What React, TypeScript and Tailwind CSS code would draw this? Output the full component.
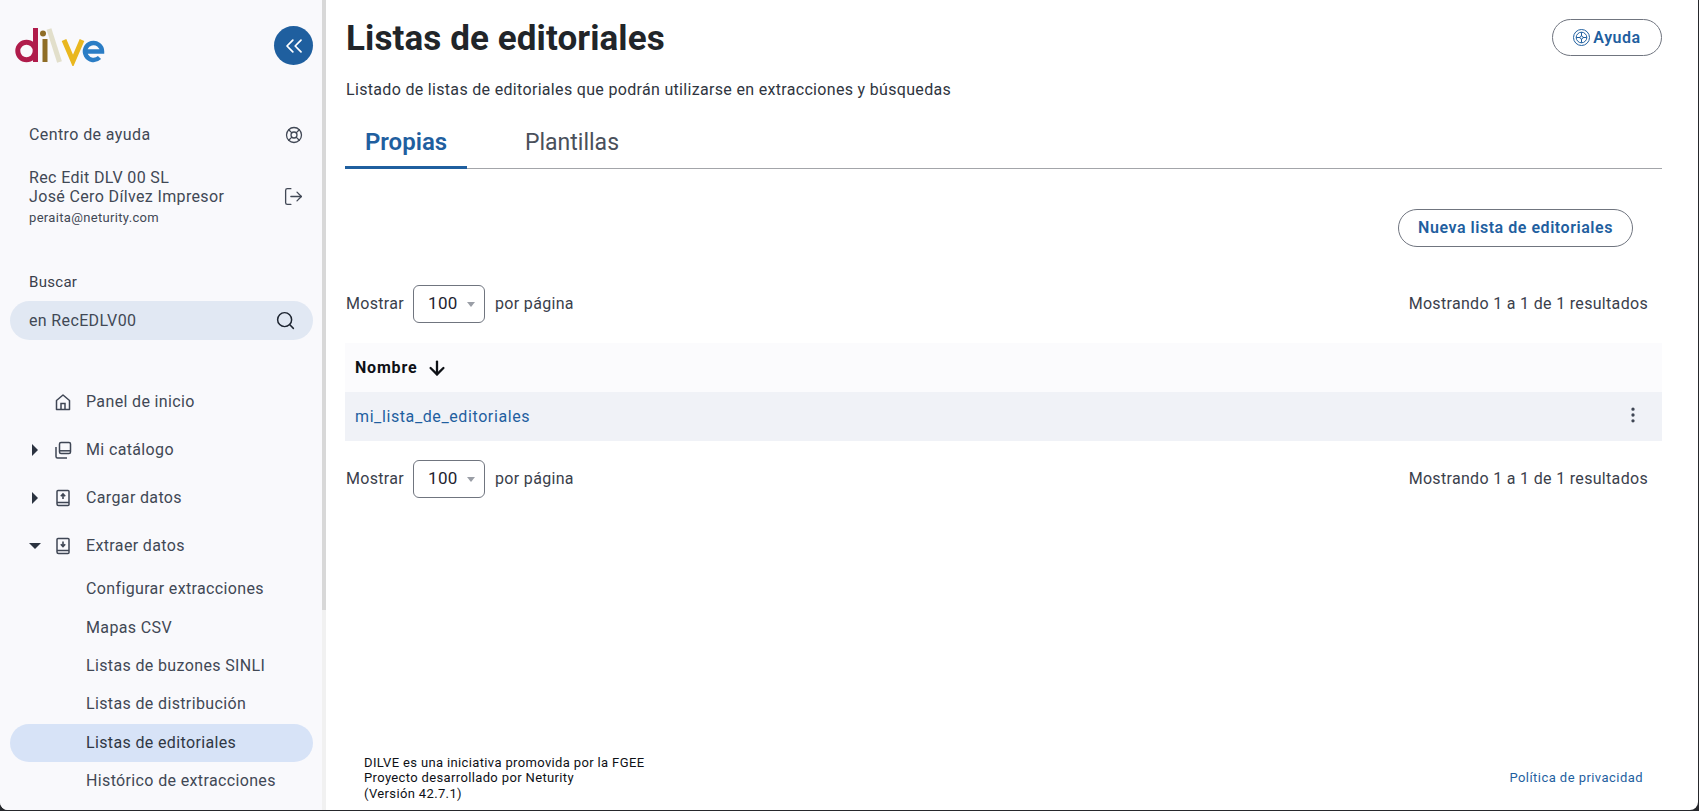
import { ArrowDown, ChevronsLeft, EllipsisVertical, LifeBuoy, LogOut, Search } from "lucide-react";

const font = "font-['Roboto',sans-serif]";

function Logo() {
  return (
    <svg width="92" height="40" viewBox="0 0 92 40" className="block ml-[1px]" fill="none">
      <circle cx="11.500" cy="25" r="8.700" stroke="#b01c4b" strokeWidth="5" />
      <path d="M20.500 2v34" stroke="#b01c4b" strokeWidth="5" />
      <circle cx="28" cy="7.500" r="3" fill="#8f6d26" />
      <path d="M30 13v23" stroke="#8f6d26" strokeWidth="5" />
      <path d="M34 3l10.500 33" stroke="#e2dfcb" strokeWidth="5" />
      <path d="M49 14l9 21 9-21" stroke="#e9b71f" strokeWidth="5" />
      <path d="M71.500 25.500h15.500a8.500 8.500 0 1 0-2.500 6" stroke="#2b7dc5" strokeWidth="4.500" />
    </svg>
  );
}

function HomeIcon() {
  return (
    <svg width="20" height="20" viewBox="0 0 20 20" fill="none" stroke="#3f4654" strokeWidth="1.500">
      <path d="M3.500 17.500V8.500L10 3l6.500 5.500v9z" strokeLinejoin="round" />
      <path d="M8 17.500v-6h4v6" />
    </svg>
  );
}

function CatalogIcon() {
  return (
    <svg width="20" height="20" viewBox="0 0 20 20" fill="none" stroke="#3f4654" strokeWidth="1.500">
      <rect x="6.500" y="2.500" width="11" height="11" rx="1.500" />
      <path d="M6.500 10.800h11" />
      <path d="M3 7v9.500A1.500 1.500 0 0 0 4.500 18H14" />
    </svg>
  );
}

function BookIcon({ up }: { up?: boolean }) {
  return (
    <svg width="20" height="20" viewBox="0 0 20 20" fill="none" stroke="#3f4654" strokeWidth="1.500">
      <path d="M4 15.500V3.500A1 1 0 0 1 5 2.500h10a1 1 0 0 1 1 1v13a1 1 0 0 1-1 1H5.500A1.500 1.500 0 0 1 4 16V14.500h12" />
      {up ? (
        <path d="M10 11V6M7.800 8.300L10 6l2.200 2.300" strokeWidth="1.600" />
      ) : (
        <path d="M10 5.500v5M7.800 8.200L10 10.500l2.200-2.300" strokeWidth="1.600" />
      )}
    </svg>
  );
}

function HelpIcon() {
  return (
    <svg width="17" height="17" viewBox="0 0 17 17" fill="none" stroke="#1f5f9f" strokeWidth="1">
      <circle cx="8.500" cy="8.500" r="8" />
      <circle cx="8.500" cy="8.500" r="5.300" />
      <circle cx="8.500" cy="8.500" r="1.500" />
      <path d="M8.500 3.200v3.800M8.500 10v3.800M3.200 8.500H7M10 8.500h3.800" />
    </svg>
  );
}

function Caret({ open }: { open?: boolean }) {
  return (
    <span className="w-[24px] flex items-center justify-center">
      {open ? (
        <span className="w-0 h-0 border-x-[6px] border-x-transparent border-t-[6px] border-t-[#2b3340]" />
      ) : (
        <span className="w-0 h-0 border-y-[6px] border-y-transparent border-l-[6px] border-l-[#2b3340]" />
      )}
    </span>
  );
}

function NavRow({ icon, label, caret, open }: { icon: React.ReactNode; label: string; caret?: boolean; open?: boolean }) {
  return (
    <div className="h-[48px] flex items-center pl-[23px] text-[16px] tracking-[0.36px] text-[#414855]">
      <span className="w-[24px] flex justify-center">{caret ? <Caret open={open} /> : null}</span>
      <span className="ml-[6px] w-[33px] flex">{icon}</span>
      <span>{label}</span>
    </div>
  );
}

function SubRow({ label, active }: { label: string; active?: boolean }) {
  return (
    <div
      className={
        "h-[38.400px] flex items-center pl-[76px] rounded-full text-[16px] tracking-[0.36px] " +
        (active ? "bg-[#d7e3f7] text-[#2f3744]" : "text-[#414855]")
      }
    >
      {label}
    </div>
  );
}

function PageRow() {
  return (
    <div className="flex items-center justify-between pl-[1px] pr-[14px] text-[16px] tracking-[0.32px] text-[#3a404b]">
      <div className="flex items-center">
        <span>Mostrar</span>
        <div className="ml-[9px] w-[72px] h-[38px] border border-[#70757f] rounded-[6px] flex items-center pl-[14px] text-[#1d2430] text-[17px]">
          <span>100</span>
          <span className="ml-[9px] w-0 h-0 border-x-[4px] border-x-transparent border-t-[5px] border-t-[#9a9ea6]" />
        </div>
        <span className="ml-[10px]">por página</span>
      </div>
      <span>Mostrando 1 a 1 de 1 resultados</span>
    </div>
  );
}

export default function App() {
  return (
    <div className={"h-[811px] w-[1699px] overflow-hidden bg-[#26282c] " + font}>
      <div className="h-[810px] w-[1698px] flex bg-white rounded-b-[8px] overflow-hidden">
        <aside className="w-[322px] shrink-0 bg-[#f9f9fc] pl-[10px] pr-[9px] overflow-hidden">
          <div className="flex justify-between items-start pt-[26px] pl-[4px]">
            <Logo />
            <button className="w-[39px] h-[39px] rounded-full bg-[#1f5f9f] text-white flex items-center justify-center">
              <ChevronsLeft size={28} strokeWidth={1.500} />
            </button>
          </div>
          <div className="mt-[58px] pl-[19px] pr-[10px] flex items-center justify-between text-[16px] tracking-[0.4px] text-[#414855] h-[22px]">
            <span>Centro de ayuda</span>
            <LifeBuoy size={18} strokeWidth={1.700} />
          </div>
          <div className="mt-[22px] pl-[19px] pr-[9px] flex items-center justify-between text-[#414855]">
            <div>
              <div className="text-[16px] leading-[19px] tracking-[0.36px]">Rec Edit DLV 00 SL</div>
              <div className="text-[16px] leading-[19px] tracking-[0.36px]">José Cero Dílvez Impresor</div>
              <div className="text-[13px] leading-[20px] mt-[2px] tracking-[0.33px]">peraita@neturity.com</div>
            </div>
            <LogOut size={21} strokeWidth={1.500} className="mb-[4px]" />
          </div>
          <div className="mt-[44px] pl-[19px] text-[15px] leading-[20px] tracking-[0.3px] text-[#3a404b]">Buscar</div>
          <div className="mt-[9px] h-[39px] rounded-full bg-[#e1e8f3] pl-[19px] pr-[17px] flex items-center justify-between text-[16px] tracking-[0.36px] text-[#414855]">
            <span>en RecEDLV00</span>
            <Search size={21} strokeWidth={1.700} className="text-[#1d2430]" />
          </div>
          <nav className="mt-[38px]">
            <div className="-ml-[10px]">
              <NavRow icon={<HomeIcon />} label="Panel de inicio" />
              <NavRow icon={<CatalogIcon />} label="Mi catálogo" caret />
              <NavRow icon={<BookIcon up />} label="Cargar datos" caret />
              <NavRow icon={<BookIcon />} label="Extraer datos" caret open />
            </div>
            <div>
              <SubRow label="Configurar extracciones" />
              <SubRow label="Mapas CSV" />
              <SubRow label="Listas de buzones SINLI" />
              <SubRow label="Listas de distribución" />
              <SubRow label="Listas de editoriales" active />
              <SubRow label="Histórico de extracciones" />
            </div>
          </nav>
        </aside>
        <div className="w-[4px] shrink-0 bg-[#f1f1f1] flex flex-col">
          <div className="h-[610px] bg-[#d8d8d8]" />
        </div>
        <main className="flex-1 flex flex-col pl-[19px] pr-[36px]">
          <div className="flex items-start justify-between pt-[19px]">
            <h1 className="ml-[1px] text-[35px] leading-[40px] tracking-[0.1px] font-bold text-[#212529]">Listas de editoriales</h1>
            <button className="w-[110px] h-[37px] rounded-full border border-[#70757f] flex items-center justify-center gap-[3px] text-[#1f5f9f] text-[16px] tracking-[0.5px] font-semibold">
              <HelpIcon />
              Ayuda
            </button>
          </div>
          <p className="ml-[1px] mt-[20px] text-[16px] leading-[22px] tracking-[0.32px] text-[#2f3540]">
            Listado de listas de editoriales que podrán utilizarse en extracciones y búsquedas
          </p>
          <div className="mt-[15px] border-b border-[#a3a5a9] flex h-[53px]">
            <div className="w-[122px] h-[53px] pt-[2px] border-b-[3px] border-[#1f5f9f] flex items-center justify-center text-[24px] font-semibold text-[#1f5f9f]">
              Propias
            </div>
            <div className="ml-[58px] pt-[2px] flex items-center text-[23px] text-[#4a505b]">Plantillas</div>
          </div>
          <div className="mt-[40px] flex justify-end pr-[29px]">
            <button className="w-[235px] h-[38px] rounded-full border border-[#70757f] text-[#1f5f9f] text-[16px] tracking-[0.54px] font-semibold">
              Nueva lista de editoriales
            </button>
          </div>
          <div className="mt-[38px]">
            <PageRow />
          </div>
          <div className="mt-[20px] h-[49px] bg-[#fbfbfd] flex items-center pl-[10px] text-[16px] tracking-[0.8px] font-bold text-[#0e1116]">
            Nombre
            <ArrowDown size={22} strokeWidth={2.500} className="ml-[9px]" />
          </div>
          <div className="h-[49px] bg-[#f0f2f7] flex items-center justify-between pl-[10px] pr-[19px] text-[16px] tracking-[0.6px] text-[#1f5f9f]">
            <span>mi_lista_de_editoriales</span>
            <EllipsisVertical size={20} strokeWidth={2} className="text-[#3f4654] mb-[3px]" />
          </div>
          <div className="mt-[19px]">
            <PageRow />
          </div>
          <div className="flex-1" />
          <div className="flex items-center justify-between pl-[19px] pr-[19px] pb-[9px] text-[13px] leading-[15.500px] tracking-[0.36px]">
            <div className="text-[#0e1116]">
              <div>DILVE es una iniciativa promovida por la FGEE</div>
              <div>Proyecto desarrollado por Neturity</div>
              <div>(Versión 42.7.1)</div>
            </div>
            <span className="text-[#1f5f9f] tracking-[0.45px]">Política de privacidad</span>
          </div>
        </main>
      </div>
    </div>
  );
}
